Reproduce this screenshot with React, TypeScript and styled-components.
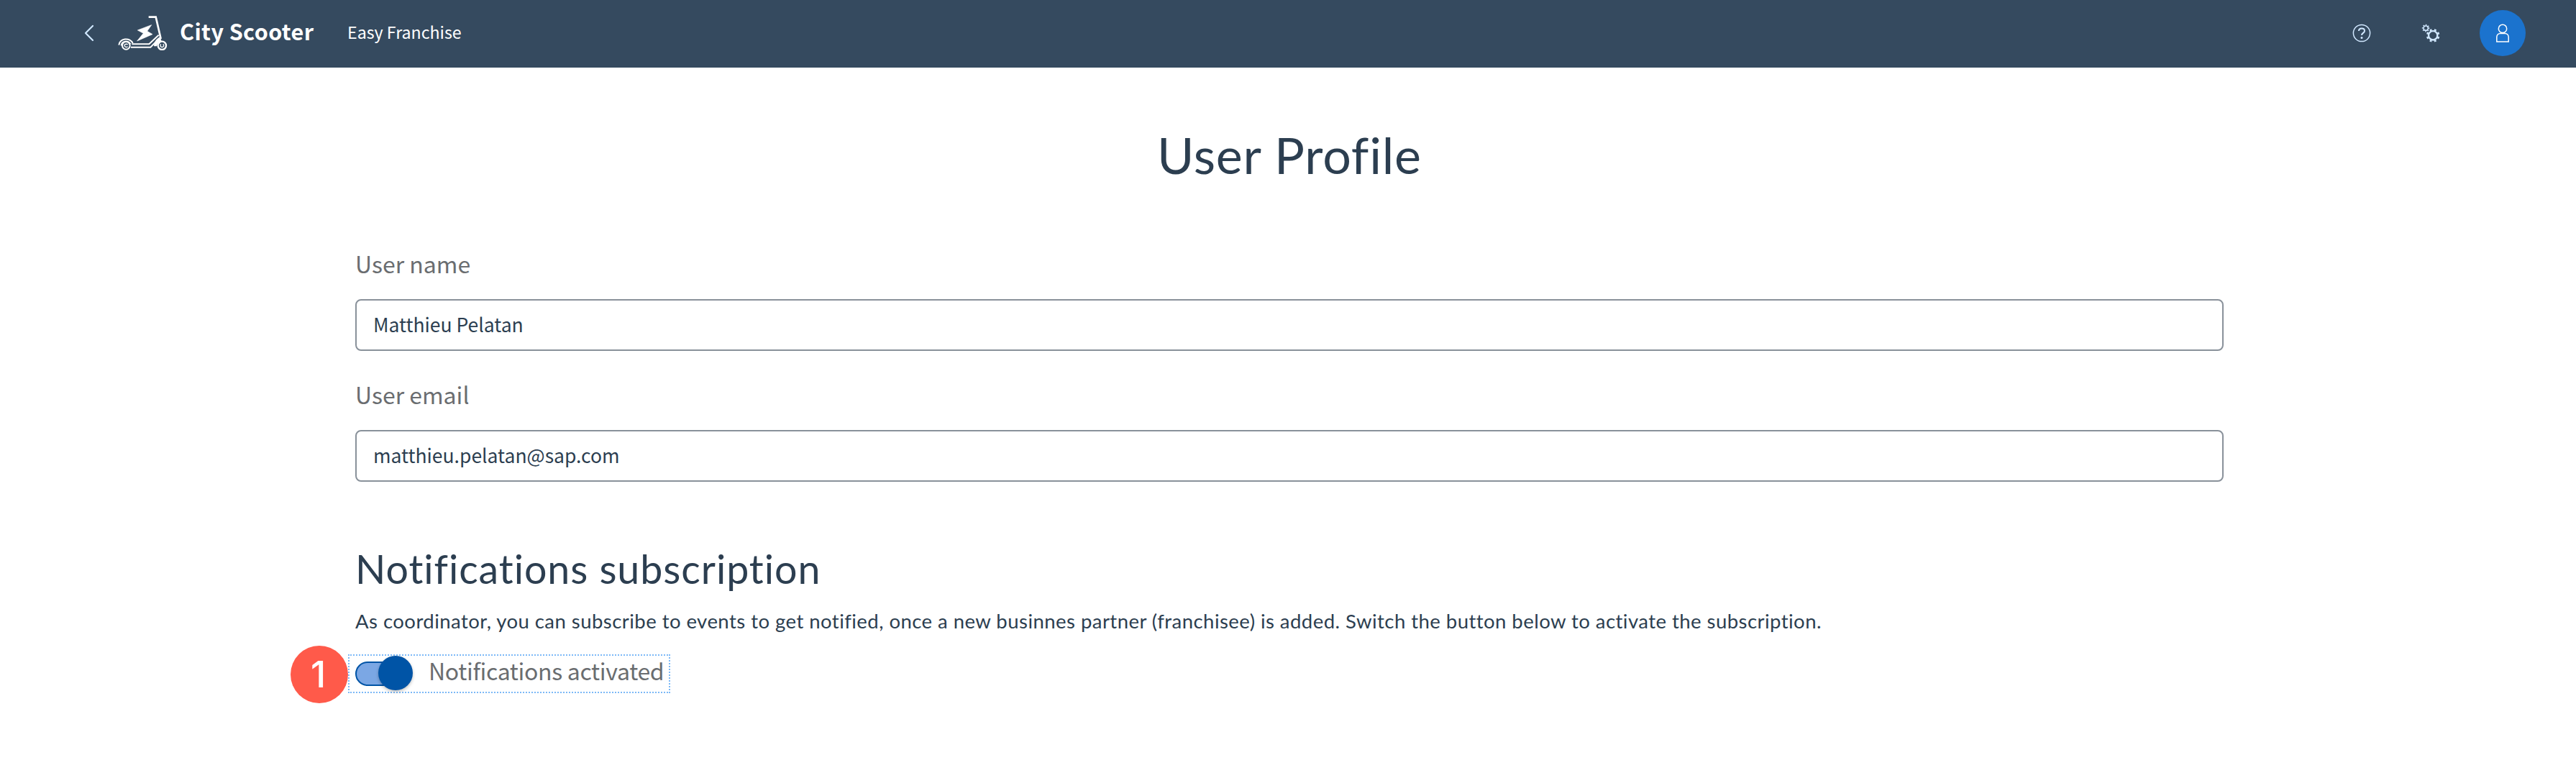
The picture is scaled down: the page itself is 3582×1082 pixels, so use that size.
import React from 'react';
import styled, { createGlobalStyle } from 'styled-components';

const uiFont = `"Noto Sans CJK JP", "Noto Sans", sans-serif`;
const headingFont = `Lato, "Open Sans", sans-serif`;

const GlobalStyle = createGlobalStyle`
  *, *::before, *::after { box-sizing: border-box; }
  body { margin: 0; background: #fff; color: #2c3e50; font-family: ${uiFont}; }
  h1, h2, p { margin: 0; font-weight: 400; }
`;

const Page = styled.div`
  min-height: 1082px;
  background: #fff;
`;

const ShellBar = styled.header`
  display: flex;
  align-items: center;
  justify-content: space-between;
  height: 94px;
  padding: 0 70px 2px 116px;
  background: #354a5f;
`;

const ShellGroup = styled.div<{ $gap?: number }>`
  display: flex;
  align-items: center;
  gap: ${(p) => p.$gap ?? 0}px;
`;

const IconButton = styled.button<{ $width: number }>`
  display: flex;
  align-items: center;
  justify-content: center;
  width: ${(p) => p.$width}px;
  height: 64px;
  padding: 0 0 1px;
  border: 0;
  background: none;
  color: #d1e8ff;
`;

const Logo = styled.svg`
  width: 70px;
  height: 48px;
  margin: 0 16px 0 32px;
  color: #fff;
`;

const ProductName = styled.span`
  width: 233px;
  padding-bottom: 6px;
  color: #fff;
  font-size: 30.5px;
  font-weight: 700;
  line-height: 40px;
  letter-spacing: 0.42px;
  white-space: nowrap;
`;

const AppName = styled.span`
  padding-bottom: 4px;
  color: #fff;
  font-size: 23.2px;
  line-height: 32px;
  white-space: nowrap;
`;

const Avatar = styled.button`
  display: flex;
  align-items: center;
  justify-content: center;
  width: 64px;
  height: 64px;
  margin-left: 2px;
  padding: 0 0 1px;
  border: 0;
  border-radius: 50%;
  background: #1b73ce;
  color: #fff;
`;

const Content = styled.main`
  display: flex;
  flex-direction: column;
  padding: 81px 490px 0 494px;
`;

const PageTitle = styled.h1`
  margin-bottom: 91px;
  font-family: ${headingFont};
  font-size: 70px;
  line-height: 80px;
  letter-spacing: 0.8px;
  text-align: center;
`;

const Form = styled.div`
  display: flex;
  flex-direction: column;
  gap: 40px;
`;

const Field = styled.div`
  display: flex;
  flex-direction: column;
  gap: 30px;
`;

const Label = styled.label`
  color: #6a6d70;
  font-size: 32px;
  line-height: 40px;
`;

const Input = styled.div`
  display: flex;
  align-items: center;
  height: 72px;
  padding: 0 23px 3px;
  border: 2px solid #89919a;
  border-radius: 8px;
  background: #fff;
  font-size: 26.5px;
  line-height: 36px;
`;

const Section = styled.section`
  display: flex;
  flex-direction: column;
  align-items: flex-start;
  padding-top: 89px;
`;

const SectionTitle = styled.h2`
  margin-bottom: 23px;
  font-family: ${headingFont};
  font-size: 55.5px;
  line-height: 64px;
  letter-spacing: 0.95px;
`;

const Description = styled.p`
  margin-bottom: 28px;
  font-family: ${headingFont};
  font-size: 27.5px;
  line-height: 36px;
  letter-spacing: 0.46px;
  white-space: nowrap;
`;

const SwitchRow = styled.div`
  position: relative;
  display: flex;
  align-items: center;
  width: 448px;
  height: 54px;
  margin-left: -10px;
  padding-left: 8px;
  border: 2px dotted #7cb9f7;
`;

const Track = styled.div`
  position: relative;
  width: 76px;
  height: 34px;
  margin-right: 26px;
  border: 2px solid #0054a6;
  border-radius: 17px;
  background: #7ba7e4;
`;

const Thumb = styled.div`
  position: absolute;
  top: -10px;
  left: 30px;
  width: 48px;
  height: 48px;
  border-radius: 50%;
  background: #0054a6;
  box-shadow: 0 2px 4px rgba(0, 0, 0, 0.25);
`;

const SwitchLabel = styled.span`
  padding-bottom: 10px;
  color: #6a6d70;
  font-size: 32px;
  line-height: 40px;
  letter-spacing: -0.33px;
  white-space: nowrap;
`;

const StepBadge = styled.div`
  position: absolute;
  top: -14px;
  left: -82px;
  display: flex;
  align-items: center;
  justify-content: center;
  width: 80px;
  height: 80px;
  padding-right: 3px;
  border-radius: 50%;
  background: #ff5a4a;
  color: #fff;
  font-family: Inter, sans-serif;
  font-size: 51px;
  font-weight: 500;
  line-height: 80px;
`;

const BackIcon = () => (
  <svg width="16" height="24" viewBox="0 0 16 24" fill="none" stroke="currentColor" strokeWidth="2.2" strokeLinecap="round" strokeLinejoin="round">
    <path d="M13 2 3 12l10 10" />
  </svg>
);

const ScooterLogo = () => (
  <Logo viewBox="222 66 210 144" fill="none" stroke="currentColor">
    <path d="M350 71H380L401 162" strokeWidth="8" />
    <path d="M362 104 304 126 328 139 302 171 366 143 344 130Z" fill="currentColor" stroke="currentColor" strokeWidth="2" />
    <path d="M226 188a30 26 0 0 1 58-8" strokeWidth="6" />
    <path d="M235 190a21 20 0 0 1 40 -6" strokeWidth="4" />
    <circle cx="256" cy="190" r="16" strokeWidth="6" />
    <path d="M263 186a8 6 0 1 0 0 8" strokeWidth="4" />
    <path d="M280 184H352L392 146" strokeWidth="6" />
    <path d="M276 197H358L394 160" strokeWidth="6" />
    <path d="M372 193C374 172 382 162 398 154L404 172C392 174 388 180 384 193Z" fill="currentColor" stroke="none" />
    <circle cx="406" cy="190" r="17" strokeWidth="7" />
    <path d="M402 184a7 7 0 1 0 8 0" strokeWidth="4" />
  </Logo>
);

const HelpIcon = () => (
  <svg width="26" height="26" viewBox="0 0 26 26" fill="none" stroke="currentColor">
    <circle cx="13" cy="13" r="11.6" strokeWidth="1.5" />
    <path d="M9 10.1C9 7.7 10.7 6.5 13 6.5s4 1.3 4 3.4c0 3-4 2.9-4 6" strokeWidth="2" />
    <circle cx="13" cy="19.4" r="1.5" fill="currentColor" stroke="none" />
  </svg>
);

const GearsIcon = () => (
  <svg width="26" height="26" viewBox="441 97 78 78" fill="none" stroke="currentColor">
    <circle cx="489.5" cy="146" r="18.5" strokeWidth="7" />
    <circle cx="489.5" cy="146" r="24" strokeWidth="8" pathLength="8" strokeDasharray="0.46 0.54" transform="rotate(12.2 489.5 146)" />
    <circle cx="459.5" cy="115.5" r="9.5" strokeWidth="4.5" />
    <circle cx="459.5" cy="115.5" r="13.5" strokeWidth="5" pathLength="8" strokeDasharray="0.42 0.58" transform="rotate(-9.5 459.5 115.5)" />
  </svg>
);

const PersonIcon = () => (
  <svg width="20" height="26" viewBox="0 0 20 26" fill="none" stroke="currentColor" strokeWidth="1.5">
    <circle cx="10" cy="6.9" r="5.7" />
    <path d="M7 13.4h6a5 5 0 0 1 5.2 5V24.9H1.8V18.4a5 5 0 0 1 5.2-5Z" />
  </svg>
);

const fields = [
  { label: 'User name', value: 'Matthieu Pelatan' },
  { label: 'User email', value: 'matthieu.pelatan@sap.com' },
];

export default function App() {
  return (
    <Page>
      <GlobalStyle />
      <ShellBar>
        <ShellGroup>
          <IconButton $width={16} aria-label="Back">
            <BackIcon />
          </IconButton>
          <ScooterLogo />
          <ProductName>City Scooter</ProductName>
          <AppName>Easy Franchise</AppName>
        </ShellGroup>
        <ShellGroup $gap={36}>
          <IconButton $width={60} aria-label="Help">
            <HelpIcon />
          </IconButton>
          <IconButton $width={60} aria-label="Settings">
            <GearsIcon />
          </IconButton>
          <Avatar aria-label="Profile">
            <PersonIcon />
          </Avatar>
        </ShellGroup>
      </ShellBar>
      <Content>
        <PageTitle>User Profile</PageTitle>
        <Form>
          {fields.map((f) => (
            <Field key={f.label}>
              <Label>{f.label}</Label>
              <Input>{f.value}</Input>
            </Field>
          ))}
        </Form>
        <Section>
          <SectionTitle>Notifications subscription</SectionTitle>
          <Description>
            As coordinator, you can subscribe to events to get notified, once a new businnes partner (franchisee) is
            added. Switch the button below to activate the subscription.
          </Description>
          <SwitchRow>
            <StepBadge>1</StepBadge>
            <Track>
              <Thumb />
            </Track>
            <SwitchLabel>Notifications activated</SwitchLabel>
          </SwitchRow>
        </Section>
      </Content>
    </Page>
  );
}
